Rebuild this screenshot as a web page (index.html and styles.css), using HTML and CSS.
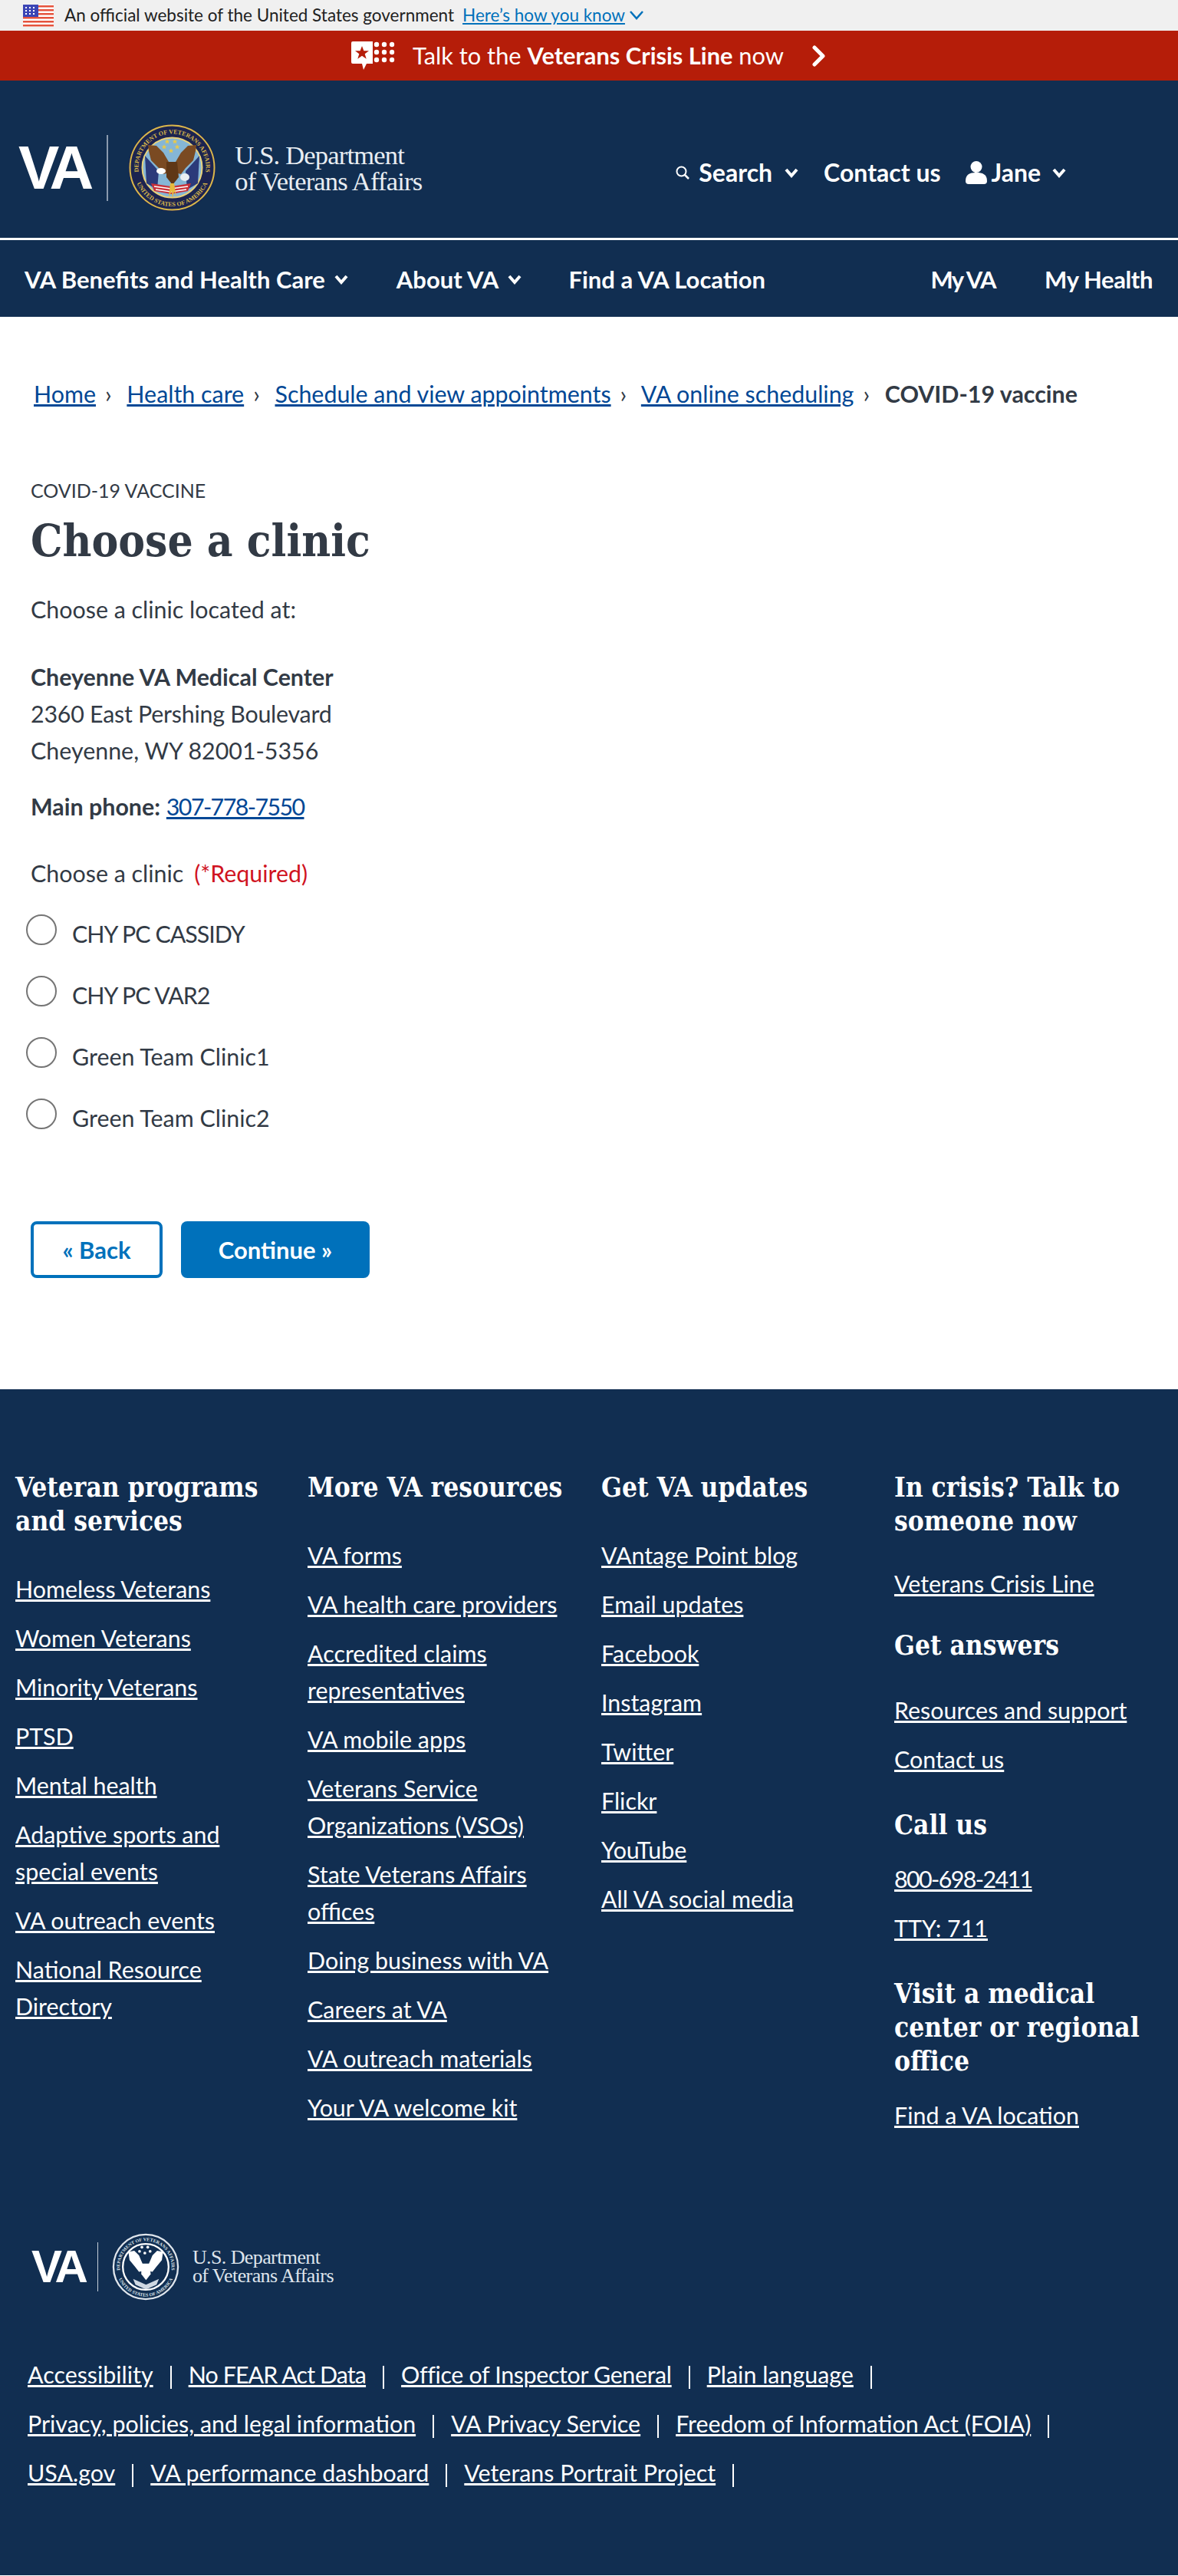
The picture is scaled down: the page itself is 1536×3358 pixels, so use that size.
FILE: index.html
```html
<!DOCTYPE html>
<html lang="en">
<head>
    <meta charset="UTF-8">
    <meta name="viewport" content="width=device-width, initial-scale=1.0">
    <title>Choose a clinic</title>
    <link rel="stylesheet" href="styles.css">
</head>
<body>
    <div class="gov-banner">
        <svg class="flag" width="40" height="29" viewBox="0 0 40 29">
            <rect width="40" height="29" fill="#fff"/>
            <path d="M0 1h40v2.500H0zM0 6h40v2.500H0zM0 11h40v2.500H0zM0 16h40v2.500H0zM0 21h40v2.500H0zM0 26h40v2.500H0z" fill="#e5533d"/>
            <rect width="20" height="16" fill="#3b45b5"/>
            <path d="M3 3h2v2H3zM8 3h2v2H8zM13 3h2v2h-2zM3 7h2v2H3zM8 7h2v2H8zM13 7h2v2h-2zM3 11h2v2H3zM8 11h2v2H8zM13 11h2v2h-2z" fill="#fff"/>
        </svg>
        <span class="gov-text">An official website of the United States government</span>
        <a class="gov-link" href="#">Here’s how you know</a>
        <svg width="20" height="14" viewBox="0 0 20 14"><path d="M2 2l8 9 8-9" fill="none" stroke="#0071bb" stroke-width="2.500"/></svg>
    </div>

    <div class="crisis-bar">
        <svg width="57" height="38" viewBox="0 0 57 38">
            <path d="M2 0h26v29H20l-4 8-2-8H2q-2 0-2-2V2q0-2 2-2z" fill="#fff"/>
            <path d="M14 6l2.400 6.200H23l-5.300 4 2 6.500-5.700-4-5.700 4 2-6.500-5.300-4h6.600z" fill="#b51d09"/>
            <g fill="#fff">
                <circle cx="33" cy="4" r="3.200"/><circle cx="43" cy="4" r="3.200"/><circle cx="53" cy="4" r="3.200"/>
                <circle cx="33" cy="14" r="3.200"/><circle cx="43" cy="14" r="3.200"/><circle cx="53" cy="14" r="3.200"/>
                <circle cx="33" cy="24" r="3.200"/><circle cx="43" cy="24" r="3.200"/><circle cx="53" cy="24" r="3.200"/>
            </g>
        </svg>
        <span class="crisis-text">Talk to the <b>Veterans Crisis Line</b> now</span>
        <svg width="20" height="28" viewBox="0 0 20 28"><path d="M4 3l11 11L4 25" fill="none" stroke="#fff" stroke-width="5" stroke-linecap="round" stroke-linejoin="round"/></svg>
    </div>

    <header class="site-header">
        <div class="header-top">
            <div class="logo">
                <span class="logo-va">VA</span>
                <span class="logo-rule"></span>
                <svg class="seal" width="115" height="115" viewBox="0 0 115 115">
                    <defs>
                        <path id="sealTop" d="M21.500 82.700A44 44 0 1 1 93.500 82.700"/>
                        <path id="sealBottom" d="M7 57.500a50.500 50.500 0 0 0 101 0"/>
                    </defs>
                    <circle cx="57.500" cy="57.500" r="57" fill="#1c2450"/>
                    <circle cx="57.500" cy="57.500" r="55" fill="none" stroke="#d9b84a" stroke-width="2"/>
                    <circle cx="57.500" cy="57.500" r="39" fill="#85b6d6" stroke="#e9d27a" stroke-width="2"/>
                    <text class="seal-text"><textPath href="#sealTop" startOffset="50%" text-anchor="middle">DEPARTMENT OF VETERANS AFFAIRS</textPath></text>
                    <text class="seal-text"><textPath href="#sealBottom" startOffset="50%" text-anchor="middle">UNITED STATES OF AMERICA</textPath></text>
                    <path d="M22 42l18 20-2 24-14-8z" fill="#2b3a7a"/>
                    <path d="M93 42L75 62l2 24 14-8z" fill="#2b3a7a"/>
                    <path d="M30 78l26 4 26-4-4 10-22 4-22-4z" fill="#c8323a"/>
                    <path d="M34 82l22 3 22-3M36 86l20 3 20-3" fill="none" stroke="#fff" stroke-width="1.500"/>
                    <path d="M26 28l11 1 9 9 7 12 1 14-8 2-6-8-10-10-3-12z" fill="#7a4a22"/>
                    <path d="M89 28l-11 1-9 9-7 12-1 14 8 2 6-8 10-10 3-12z" fill="#7a4a22"/>
                    <path d="M50 50h14l2 20-8 10-8-10z" fill="#5f3716"/>
                    <ellipse cx="43" cy="62" rx="6" ry="4" fill="#fff"/>
                    <ellipse cx="74" cy="70" rx="6" ry="5" fill="#e8eef2"/>
                    <path d="M55 78l-2 18 4-8 1 10 2-10 3 8-3-18z" fill="#e6b93c"/>
                    <path d="M51 20l1 2.500h2.500l-2 1.500.8 2.500-2.300-1.500-2.300 1.500.8-2.500-2-1.500H50zM61 20l1 2.500h2.500l-2 1.500.8 2.500-2.300-1.500-2.300 1.500.8-2.500-2-1.500H60zM47 27l1 2.500h2.500l-2 1.500.8 2.500-2.300-1.500-2.300 1.500.8-2.500-2-1.500H46zM64 27l1 2.500h2.500l-2 1.500.8 2.500-2.300-1.500-2.300 1.500.8-2.500-2-1.500H63zM56 32l1 2.500h2.500l-2 1.500.8 2.500-2.300-1.500-2.300 1.500.8-2.500-2-1.500H55z" fill="#e9c94a"/>
                </svg>
                <span class="logo-name">U.S. Department<br>of Veterans Affairs</span>
            </div>
            <div class="utility">
                <svg class="search-icon" width="20" height="20" viewBox="0 0 20 20"><circle cx="8.500" cy="8.500" r="6" fill="none" stroke="#fff" stroke-width="2"/><path d="M13 13l5 5" stroke="#fff" stroke-width="2.500"/></svg>
                <a class="utility-item item-search" href="#">Search</a>
                <svg class="chev" width="20" height="14" viewBox="0 0 20 14"><path d="M3 3l7 8 7-8" fill="none" stroke="#fff" stroke-width="4"/></svg>
                <a class="utility-item item-contact" href="#">Contact us</a>
                <svg class="person" width="28" height="30" viewBox="0 0 28 30"><circle cx="14" cy="7.500" r="7.500" fill="#fff"/><path d="M0 26c0-9 6-11 14-11s14 2 14 11q0 4-4 4H4q-4 0-4-4z" fill="#fff"/></svg>
                <a class="utility-item item-jane" href="#">Jane</a>
                <svg class="chev" width="20" height="14" viewBox="0 0 20 14"><path d="M3 3l7 8 7-8" fill="none" stroke="#fff" stroke-width="4"/></svg>
            </div>
        </div>
        <nav class="main-nav">
            <a href="#">VA Benefits and Health Care</a>
            <svg class="chev" width="20" height="14" viewBox="0 0 20 14"><path d="M3 3l7 8 7-8" fill="none" stroke="#fff" stroke-width="4"/></svg>
            <a class="nav-about" href="#">About VA</a>
            <svg class="chev" width="20" height="14" viewBox="0 0 20 14"><path d="M3 3l7 8 7-8" fill="none" stroke="#fff" stroke-width="4"/></svg>
            <a class="nav-find" href="#">Find a VA Location</a>
            <a class="nav-myva" href="#">My VA</a>
            <a class="nav-myhealth" href="#">My Health</a>
        </nav>
    </header>

    <main class="content">
        <div class="breadcrumbs">
            <a href="#">Home</a><span class="sep">›</span>
            <a href="#">Health care</a><span class="sep">›</span>
            <a href="#">Schedule and view appointments</a><span class="sep">›</span>
            <a href="#">VA online scheduling</a><span class="sep">›</span>
            <b>COVID-19 vaccine</b>
        </div>

        <div class="eyebrow">COVID-19 VACCINE</div>
        <h1>Choose a clinic</h1>
        <p class="intro">Choose a clinic located at:</p>
        <p class="address"><b>Cheyenne VA Medical Center</b><br><span class="street">2360 East Pershing Boulevard</span><br>Cheyenne, WY 82001-5356</p>
        <p class="phone"><b>Main phone:</b> <a class="digits" href="#">307-778-7550</a></p>

        <form>
            <div class="field-label">Choose a clinic <span class="required">(*Required)</span></div>
            <label class="radio-row"><span class="radio"></span><span class="caps">CHY PC CASSIDY</span></label>
            <label class="radio-row"><span class="radio"></span><span class="caps">CHY PC VAR2</span></label>
            <label class="radio-row"><span class="radio"></span>Green Team Clinic1</label>
            <label class="radio-row"><span class="radio"></span>Green Team Clinic2</label>
            <div class="buttons">
                <button type="button" class="btn-back">« Back</button>
                <button type="button" class="btn-continue">Continue »</button>
            </div>
        </form>
    </main>

    <footer class="site-footer">
        <div class="footer-cols">
            <div>
                <h3>Veteran programs and services</h3>
                <ul>
                    <li><a href="#">Homeless Veterans</a></li>
                    <li><a href="#">Women Veterans</a></li>
                    <li><a href="#">Minority Veterans</a></li>
                    <li><a href="#">PTSD</a></li>
                    <li><a href="#">Mental health</a></li>
                    <li><a href="#">Adaptive sports and special events</a></li>
                    <li><a href="#">VA outreach events</a></li>
                    <li><a href="#">National Resource Directory</a></li>
                </ul>
            </div>
            <div>
                <h3>More VA resources</h3>
                <ul>
                    <li><a href="#">VA forms</a></li>
                    <li><a href="#">VA health care providers</a></li>
                    <li><a href="#">Accredited claims representatives</a></li>
                    <li><a href="#">VA mobile apps</a></li>
                    <li><a href="#">Veterans Service Organizations (VSOs)</a></li>
                    <li><a href="#">State Veterans Affairs offices</a></li>
                    <li><a href="#">Doing business with VA</a></li>
                    <li><a href="#">Careers at VA</a></li>
                    <li><a href="#">VA outreach materials</a></li>
                    <li><a href="#">Your VA welcome kit</a></li>
                </ul>
            </div>
            <div>
                <h3>Get VA updates</h3>
                <ul>
                    <li><a href="#">VAntage Point blog</a></li>
                    <li><a href="#">Email updates</a></li>
                    <li><a href="#">Facebook</a></li>
                    <li><a href="#">Instagram</a></li>
                    <li><a href="#">Twitter</a></li>
                    <li><a href="#">Flickr</a></li>
                    <li><a href="#">YouTube</a></li>
                    <li><a href="#">All VA social media</a></li>
                </ul>
            </div>
            <div class="col-help">
                <h3 class="head-crisis">In crisis? Talk to someone now</h3>
                <ul class="list-crisis">
                    <li><a href="#">Veterans Crisis Line</a></li>
                </ul>
                <h3 class="head-answers">Get answers</h3>
                <ul>
                    <li><a href="#">Resources and support</a></li>
                    <li><a href="#">Contact us</a></li>
                </ul>
                <h3 class="head-small">Call us</h3>
                <ul>
                    <li><a class="digits" href="#">800-698-2411</a></li>
                    <li><a href="#">TTY: 711</a></li>
                </ul>
                <h3 class="head-small">Visit a medical center or regional office</h3>
                <ul>
                    <li><a href="#">Find a VA location</a></li>
                </ul>
            </div>
        </div>

        <div class="footer-logo">
            <span class="footer-va">VA</span>
            <span class="footer-rule"></span>
            <svg width="88" height="88" viewBox="0 0 115 115">
                <defs>
                    <path id="footTop" d="M21.500 82.700A44 44 0 1 1 93.500 82.700"/>
                    <path id="footBottom" d="M7 57.500a50.500 50.500 0 0 0 101 0"/>
                </defs>
                <circle cx="57.500" cy="57.500" r="55" fill="#112e51" stroke="#dfe5ec" stroke-width="3"/>
                <circle cx="57.500" cy="57.500" r="39" fill="#112e51" stroke="#fff" stroke-width="3"/>
                <text class="foot-seal-text"><textPath href="#footTop" startOffset="50%" text-anchor="middle">DEPARTMENT OF VETERANS AFFAIRS</textPath></text>
                <text class="foot-seal-text"><textPath href="#footBottom" startOffset="50%" text-anchor="middle">UNITED STATES OF AMERICA</textPath></text>
                <path d="M28 32l10-2 8 8 6 14 2 12-8 2-6-8-10-12zM87 32l-10-2-8 8-6 14-2 12 8 2 6-8 10-12z" fill="#fff"/>
                <path d="M50 52h14l2 18-8 10-8-10z" fill="#fff"/>
                <path d="M36 78l22 10 22-10-4 10-18 8-18-8z" fill="#cfd8e2"/>
                <g fill="#fff">
                    <circle cx="51" cy="24" r="2.400"/><circle cx="61" cy="24" r="2.400"/><circle cx="47" cy="31" r="2.400"/><circle cx="65" cy="31" r="2.400"/><circle cx="56" cy="34" r="2.400"/>
                </g>
            </svg>
            <span class="footer-name">U.S. Department<br>of Veterans Affairs</span>
        </div>

        <div class="legal">
            <div class="legal-row"><a href="#">Accessibility</a><a class="legal-caps" href="#">No FEAR Act Data</a><a class="legal-office" href="#">Office of Inspector General</a><a href="#">Plain language</a></div>
            <div class="legal-row"><a href="#">Privacy, policies, and legal information</a><a href="#">VA Privacy Service</a><a href="#">Freedom of Information Act (FOIA)</a></div>
            <div class="legal-row"><a href="#">USA.gov</a><a href="#">VA performance dashboard</a><a href="#">Veterans Portrait Project</a></div>
        </div>
    </footer>
</body>
</html>
```
FILE: styles.css
```css
body {
    font-family: Lato, "Noto Sans", sans-serif;
    font-size: 30.4px;
    line-height: 48px;
    color: #323a45;
    margin: 0;
    padding: 0;
}
a {
    color: inherit;
}

/* top banners */
.gov-banner {
    height: 40px;
    background-color: #f0f0f0;
    display: flex;
    align-items: center;
    padding-left: 30px;
    font-size: 22.5px;
    line-height: 40px;
    color: #212121;
}
.flag {
    margin-right: 14px;
}
.gov-link {
    color: #0071bb;
    margin-left: 11px;
    margin-right: 5px;
}
.crisis-bar {
    height: 65px;
    background-color: #b51d09;
    color: #fff;
    display: flex;
    align-items: center;
    justify-content: center;
    font-size: 30.8px;
}
.crisis-text {
    margin-left: 23px;
    margin-right: 36px;
}

/* header */
.site-header {
    background-color: #112e51;
    color: #fff;
}
.site-header a {
    color: #fff;
    text-decoration: none;
    font-weight: 700;
}
.header-top {
    height: 208px;
    box-sizing: border-box;
    padding-top: 22px;
    display: flex;
    align-items: center;
    border-bottom: 3px solid #fff;
}
.logo {
    display: flex;
    align-items: center;
    padding-left: 24px;
    flex: none;
}
.logo-va {
    font-family: "Liberation Sans", sans-serif;
    font-weight: 700;
    font-size: 80px;
    line-height: 80px;
    letter-spacing: -7px;
    padding-right: 7px;
    margin-right: 17px;
}
.logo-rule {
    width: 2px;
    height: 86px;
    background-color: #8a9aae;
    margin-right: 26px;
}
.seal-text {
    font-family: "Liberation Serif", serif;
    font-weight: 700;
    font-size: 8px;
    fill: #d9b84a;
}
.logo-name {
    font-family: "Liberation Serif", serif;
    font-size: 34.500px;
    line-height: 34px;
    letter-spacing: -0.8px;
    margin-left: 24px;
    color: #e8edf2;
}
.utility {
    display: flex;
    align-items: center;
    margin-left: 330px;
    margin-top: 12px;
    font-size: 32px;
}
.chev {
    flex: none;
}
.item-search {
    margin-left: 11px;
    margin-right: 15px;
}
.item-contact {
    margin-left: 32px;
    margin-right: 32px;
}
.item-jane {
    margin-left: 6px;
    margin-right: 14px;
}
.main-nav {
    height: 100px;
    box-sizing: border-box;
    padding-top: 2px;
    display: flex;
    align-items: center;
    padding-left: 32px;
    font-size: 31px;
}
.main-nav .chev {
    margin-left: 11px;
}
.nav-about {
    margin-left: 62px;
}
.nav-find {
    margin-left: 60px;
}
.nav-myva {
    margin-left: auto;
    letter-spacing: -1.5px;
}
.nav-myhealth {
    margin-left: 64px;
    margin-right: 33px;
    letter-spacing: -0.4px;
}

/* page content */
.content {
    padding: 76px 40px 145px;
}
.breadcrumbs {
    padding-left: 4px;
    margin-bottom: 82px;
}
.breadcrumbs a,
.phone a {
    color: #004795;
}
.sep {
    margin: 0 12px;
    color: #323a45;
}
.eyebrow {
    font-size: 25px;
    line-height: 40px;
}
h1 {
    font-family: "DejaVu Serif Condensed", "DejaVu Serif", serif;
    font-weight: 700;
    font-size: 58px;
    line-height: 70px;
    margin: 11px 0 30px;
}
p {
    margin: 0;
}
.intro {
    margin-bottom: 40px;
}
.address {
    margin-bottom: 25px;
}
.street {
    letter-spacing: -0.25px;
}
.digits {
    letter-spacing: -1.6px;
}
.phone {
    margin-bottom: 39px;
}
.field-label {
    margin-bottom: 15px;
}
.required {
    color: #d0131f;
    margin-left: 6px;
}
.radio-row {
    display: flex;
    align-items: center;
    height: 80px;
    margin-left: -6px;
}
.caps {
    letter-spacing: -1px;
}
.radio {
    width: 36px;
    height: 36px;
    border: 2px solid #757575;
    border-radius: 50%;
    background-color: #fff;
    margin-right: 20px;
    margin-top: -10px;
    flex: none;
}
.buttons {
    display: flex;
    gap: 24px;
    margin-top: 95px;
}
button {
    font-family: inherit;
    font-size: 31px;
    font-weight: 700;
    height: 74px;
    border-radius: 8px;
    cursor: pointer;
}
.btn-back {
    width: 172px;
    background-color: #fff;
    color: #0071bb;
    border: 4px solid #0071bb;
}
.btn-continue {
    width: 246px;
    background-color: #0071bb;
    color: #fff;
    border: none;
}

/* footer */
.site-footer {
    background-color: #112e51;
    color: #fff;
    height: 1546px;
    padding: 106px 20px 0;
    box-sizing: border-box;
}
.footer-cols {
    display: grid;
    grid-template-columns: 381px 383px 382px 340px;
    height: 994px;
}
.footer-cols ul {
    list-style: none;
    margin: 0 0 40px;
    padding: 0 40px 0 0;
}
.footer-cols li {
    margin-bottom: 16px;
}
.footer-cols .col-help ul {
    padding-right: 0;
}
h3 {
    font-family: "DejaVu Serif Condensed", "DejaVu Serif", serif;
    font-weight: 700;
    font-size: 35px;
    line-height: 44px;
    margin: 0 0 42px;
}
.footer-cols .list-crisis {
    margin-bottom: 35px;
}
.head-crisis {
    margin-bottom: 35px;
}
.head-answers {
    margin-bottom: 38px;
}
.head-small {
    margin-bottom: 24px;
}
.footer-logo {
    display: flex;
    align-items: center;
    padding-left: 21px;
}
.footer-va {
    font-family: "Liberation Sans", sans-serif;
    font-weight: 700;
    font-size: 60px;
    line-height: 60px;
    letter-spacing: -5px;
    padding-right: 5px;
    margin-right: 12px;
}
.footer-rule {
    width: 1px;
    height: 64px;
    background-color: #c5ced8;
    margin-right: 18px;
}
.foot-seal-text {
    font-family: "Liberation Serif", serif;
    font-weight: 700;
    font-size: 8px;
    fill: #dfe5ec;
}
.footer-name {
    font-family: "Liberation Serif", serif;
    font-size: 26px;
    line-height: 24px;
    letter-spacing: -0.6px;
    margin-left: 17px;
    color: #dfe5ec;
}
.legal {
    margin-top: 64px;
    padding-left: 16px;
}
.legal-row {
    height: 64px;
    display: flex;
    align-items: center;
}
.legal-row a {
    padding-right: 22px;
}
.legal-row .legal-caps {
    letter-spacing: -0.9px;
}
.legal-row .legal-office {
    letter-spacing: -0.35px;
}
.legal-row a::after {
    content: "";
    display: inline-block;
    width: 2px;
    height: 30px;
    background-color: #fff;
    margin-left: 22px;
    vertical-align: middle;
}
```
